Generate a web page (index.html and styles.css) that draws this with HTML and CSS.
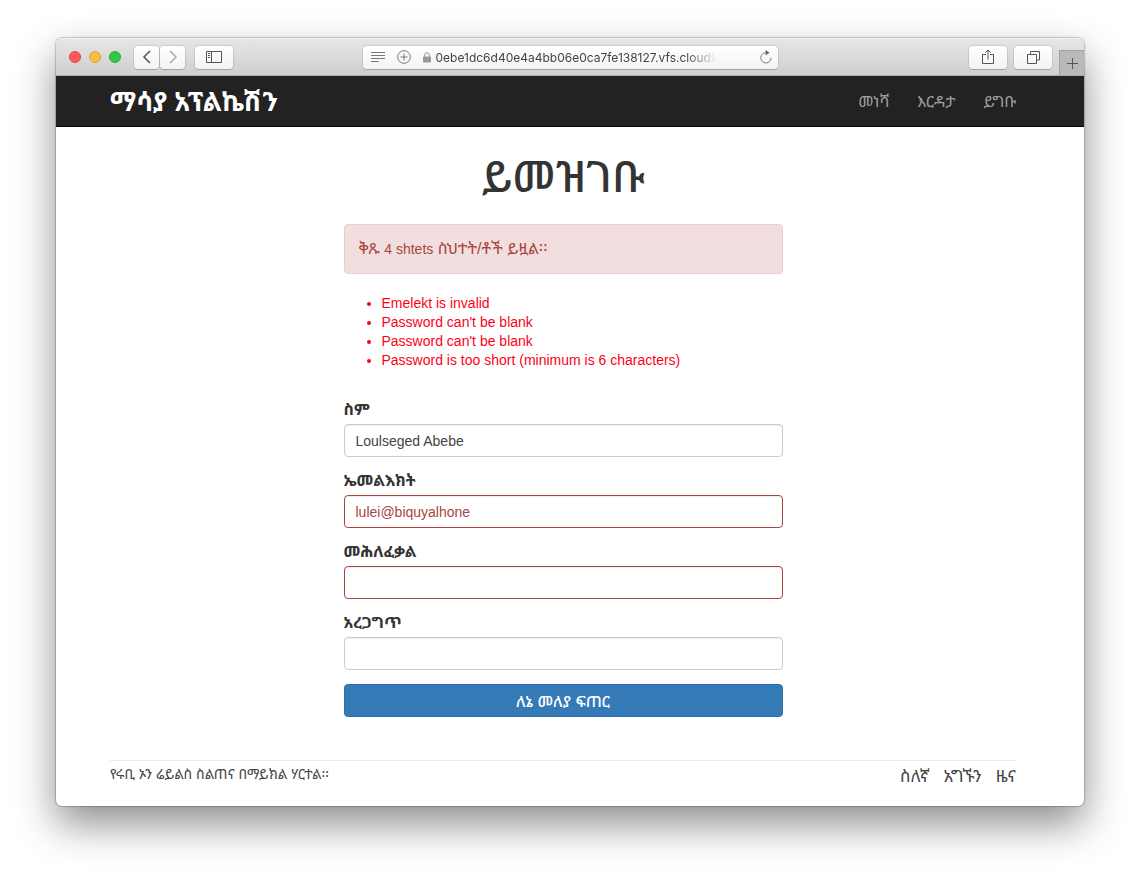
FILE: index.html
```html
<!DOCTYPE html>
<html lang="am">
<head>
    <meta charset="UTF-8">
    <meta name="viewport" content="width=device-width, initial-scale=1.0">
    <title>ይመዝገቡ | ማሳያ አፕልኬሽን</title>
    <link rel="stylesheet" href="styles.css">
</head>
<body>
    <div class="window">
        <!-- Browser toolbar -->
        <div class="toolbar">
            <div class="toolbar-side">
                <div class="lights">
                    <span class="light red"></span>
                    <span class="light yellow"></span>
                    <span class="light green"></span>
                </div>
                <div class="history">
                    <button type="button" class="tool back" aria-label="Back">
                        <svg width="10" height="14" viewBox="0 0 10 14"><path d="M8 1L2 7L8 13"/></svg>
                    </button>
                    <button type="button" class="tool forward" aria-label="Forward">
                        <svg width="10" height="14" viewBox="0 0 10 14"><path d="M2 1L8 7L2 13"/></svg>
                    </button>
                </div>
                <button type="button" class="tool wide" aria-label="Sidebar">
                    <svg width="16" height="12" viewBox="0 0 16 12"><path d="M.5.5h15v11H.5zM5.5.5v11M2 2.500h2M2 4.500h2M2 6.500h2"/></svg>
                </button>
            </div>
            <div class="address">
                <svg class="reader" width="14" height="10" viewBox="0 0 14 10"><path d="M0 .5h14M0 3.500h14M0 6.500h14M0 9.500h8"/></svg>
                <svg width="14" height="14" viewBox="0 0 14 14"><circle cx="7" cy="7" r="6.300"/><path d="M7 3.500v7M3.500 7h7"/></svg>
                <svg class="lock" width="8" height="11" viewBox="0 0 8 11"><path class="shackle" d="M1.700 5V3a2.300 2.300 0 0 1 4.600 0v2"/><rect y="4.500" width="8" height="6" rx=".7"/></svg>
                <span class="url">0ebe1dc6d40e4a4bb06e0ca7fe138127.vfs.cloud9</span>
                <button type="button" class="reload" aria-label="Reload">
                    <svg width="12" height="14" viewBox="0 0 12 14"><path d="M6.500 2.600A5.200 5.200 0 1 0 11.200 7.800"/><path class="tip" d="M5.600 0L9.600 2.700L5.600 5.400z"/></svg>
                </button>
            </div>
            <div class="toolbar-side right">
                <button type="button" class="tool wide" aria-label="Share">
                    <svg width="12" height="16" viewBox="0 0 12 16"><path d="M4 5.500H.5v9h11v-9H8M6 10.500V1.200M3.300 3.700L6 1l2.700 2.700"/></svg>
                </button>
                <button type="button" class="tool wide" aria-label="Show all tabs">
                    <svg width="13" height="13" viewBox="0 0 13 13"><path d="M.5 3.500h9v9h-9zM3.500 3.500v-3h9v8.500h-3"/></svg>
                </button>
                <button type="button" class="new-tab" aria-label="New tab">
                    <svg width="11" height="11" viewBox="0 0 11 11"><path d="M5.500 0v11M0 5.500h11"/></svg>
                </button>
            </div>
        </div>

        <header class="navbar">
            <a class="logo" href="#">ማሳያ አፕልኬሽን</a>
            <nav class="nav">
                <a href="#">መነሻ</a>
                <a href="#">እርዳታ</a>
                <a href="#">ይግቡ</a>
            </nav>
        </header>

        <main class="container">
            <h1>ይመዝገቡ</h1>
            <form class="signup" novalidate>
                <div class="alert">ቅጹ <span class="count">4 shtets</span> ስህተት/ቶች ይዟል፡፡</div>
                <ul class="errors">
                    <li>Emelekt is invalid</li>
                    <li>Password can't be blank</li>
                    <li>Password can't be blank</li>
                    <li>Password is too short (minimum is 6 characters)</li>
                </ul>
                <label for="name">ስም</label>
                <input class="field" type="text" id="name" value="Loulseged Abebe">
                <label for="email">ኤመልእክት</label>
                <input class="field invalid" type="email" id="email" value="lulei@biquyalhone">
                <label for="password">መሕለፈቃል</label>
                <input class="field invalid" type="password" id="password">
                <label for="confirmation">አረጋግጥ</label>
                <input class="field" type="password" id="confirmation">
                <button type="submit" class="submit">ለኔ መለያ ፍጠር</button>
            </form>
            <footer class="footer">
                <small>የሩቢ ኦን ሬይልስ ስልጠና በማይክል ሃርተል፡፡</small>
                <nav class="footer-nav">
                    <a href="#">ስለኛ</a>
                    <a href="#">አግኙን</a>
                    <a href="#">ዜና</a>
                </nav>
            </footer>
        </main>
    </div>
</body>
</html>
```
FILE: styles.css
```css
* {
    box-sizing: border-box;
}

body {
    margin: 0;
    padding: 38px 56px 74px;
    background: #fff;
    color: #333;
    font-family: "Liberation Sans", "Noto Sans Ethiopic", "Noto Sans", sans-serif;
    font-size: 14px;
    line-height: 19px;
}

a {
    color: inherit;
    text-decoration: none;
}

button {
    padding: 0;
    border: none;
    font-family: inherit;
}

.window {
    overflow: hidden;
    border-radius: 6px;
    background: #fff;
    box-shadow: 0 0 1px 1px rgba(0, 0, 0, 0.2), 0 18px 40px rgba(0, 0, 0, 0.45);
}

/* Browser toolbar */
.toolbar {
    display: flex;
    align-items: center;
    height: 38px;
    border-top: 1px solid #f3f3f3;
    border-bottom: 1px solid #adadad;
    background: linear-gradient(#e6e6e6, #cfcfcf);
}

.toolbar svg {
    fill: none;
    stroke: #555;
}

.toolbar-side {
    display: flex;
    flex: 1;
    align-items: center;
    height: 100%;
}

.toolbar-side.right {
    justify-content: flex-end;
    gap: 7px;
}

.lights {
    display: flex;
    gap: 8px;
    margin: 0 13px;
}

.light {
    width: 12px;
    height: 12px;
    border: 1px solid #e0443e;
    border-radius: 50%;
    background: #fc5b57;
}

.light.yellow {
    border-color: #dea035;
    background: #fdbc40;
}

.light.green {
    border-color: #27aa35;
    background: #33c748;
}

.history {
    display: flex;
    gap: 1px;
    margin-right: 10px;
}

.tool {
    display: flex;
    align-items: center;
    justify-content: center;
    width: 25px;
    height: 23px;
    border-radius: 4px;
    background: linear-gradient(#fff, #f3f3f3);
    box-shadow: 0 0 1px 1px rgba(0, 0, 0, 0.1), 0 1px 0 rgba(0, 0, 0, 0.15);
}

.tool.wide {
    width: 38px;
}

.toolbar .back path {
    stroke-width: 1.5;
}

.toolbar .forward path {
    stroke: #aaa;
    stroke-width: 1.5;
}

.address {
    display: flex;
    align-items: center;
    width: 415px;
    height: 23px;
    padding: 0 6px 0 8px;
    border-radius: 4px;
    background: linear-gradient(#fff, #f4f4f4);
    box-shadow: 0 0 1px 1px rgba(0, 0, 0, 0.1), 0 1px 0 rgba(0, 0, 0, 0.15);
}

.address svg {
    flex: none;
    margin-right: 12px;
    stroke: #777;
}

.address .lock {
    margin-right: 5px;
    fill: #999;
    stroke: none;
}

.lock .shackle {
    fill: none;
    stroke: #999;
}

.url {
    flex: 1;
    overflow: hidden;
    color: #444;
    font-family: Inter, sans-serif;
    font-size: 12px;
    white-space: nowrap;
    -webkit-mask-image: linear-gradient(to right, #000 250px, transparent 281px);
    mask-image: linear-gradient(to right, #000 250px, transparent 281px);
}

.reload {
    display: flex;
    background: none;
}

.address .reload svg {
    margin: 0;
}

.address .reload .tip {
    fill: #666;
    stroke: none;
}

.new-tab {
    display: flex;
    align-items: center;
    justify-content: center;
    align-self: flex-end;
    width: 25px;
    height: 25px;
    border-top: 1px solid #a2a2a2;
    border-left: 1px solid #a2a2a2;
    background: #b9b9b9;
}

/* Page header */
.navbar {
    display: flex;
    align-items: center;
    justify-content: space-between;
    height: 51px;
    padding: 0 68px 0 54px;
    border-bottom: 1px solid #080808;
    background: #222;
}

.logo {
    padding-top: 2px;
    color: #fff;
    font-size: 26px;
    font-weight: bold;
    line-height: 32px;
}

.nav {
    display: flex;
    gap: 28px;
    color: #9d9d9d;
    font-size: 16px;
}

.container {
    padding: 20px 68px 18px 54px;
}

h1 {
    margin: 0;
    font-size: 44px;
    font-weight: 500;
    line-height: 60px;
    text-align: center;
}

/* Sign up form */
.signup {
    display: flex;
    flex-direction: column;
    max-width: 439px;
    margin: 17px auto 43px;
}

.alert {
    padding: 15px 14px;
    border: 1px solid #ebccd1;
    border-radius: 4px;
    background: #f2dede;
    color: #a94442;
    font-size: 16px;
    line-height: 18px;
}

.count {
    font-size: 14px;
}

.errors {
    margin: 20px 0 30px;
    padding-left: 38px;
    color: #ff0018;
}

label {
    margin-bottom: 5px;
    font-size: 16px;
    font-weight: bold;
}

.field {
    width: 100%;
    height: 33px;
    margin: 0 0 14px;
    padding: 0 11px;
    border: 1px solid #ccc;
    border-radius: 4px;
    background: #fff;
    box-shadow: inset 0 1px 1px rgba(0, 0, 0, 0.075);
    color: #444;
    font-family: inherit;
    font-size: 14px;
}

.field.invalid {
    border-color: #a94442;
    color: #a94442;
}

.submit {
    height: 33px;
    border: 1px solid #2e6da4;
    border-radius: 4px;
    background: #337ab7;
    color: #fff;
    font-size: 16px;
    font-weight: 500;
}

/* Page footer */
.footer {
    display: flex;
    justify-content: space-between;
    padding-top: 4px;
    border-top: 1px solid #eaeaea;
    color: #444;
}

.footer small {
    font-size: 14px;
}

.footer-nav {
    display: flex;
    gap: 14px;
    font-size: 17px;
    line-height: 23px;
}
```
